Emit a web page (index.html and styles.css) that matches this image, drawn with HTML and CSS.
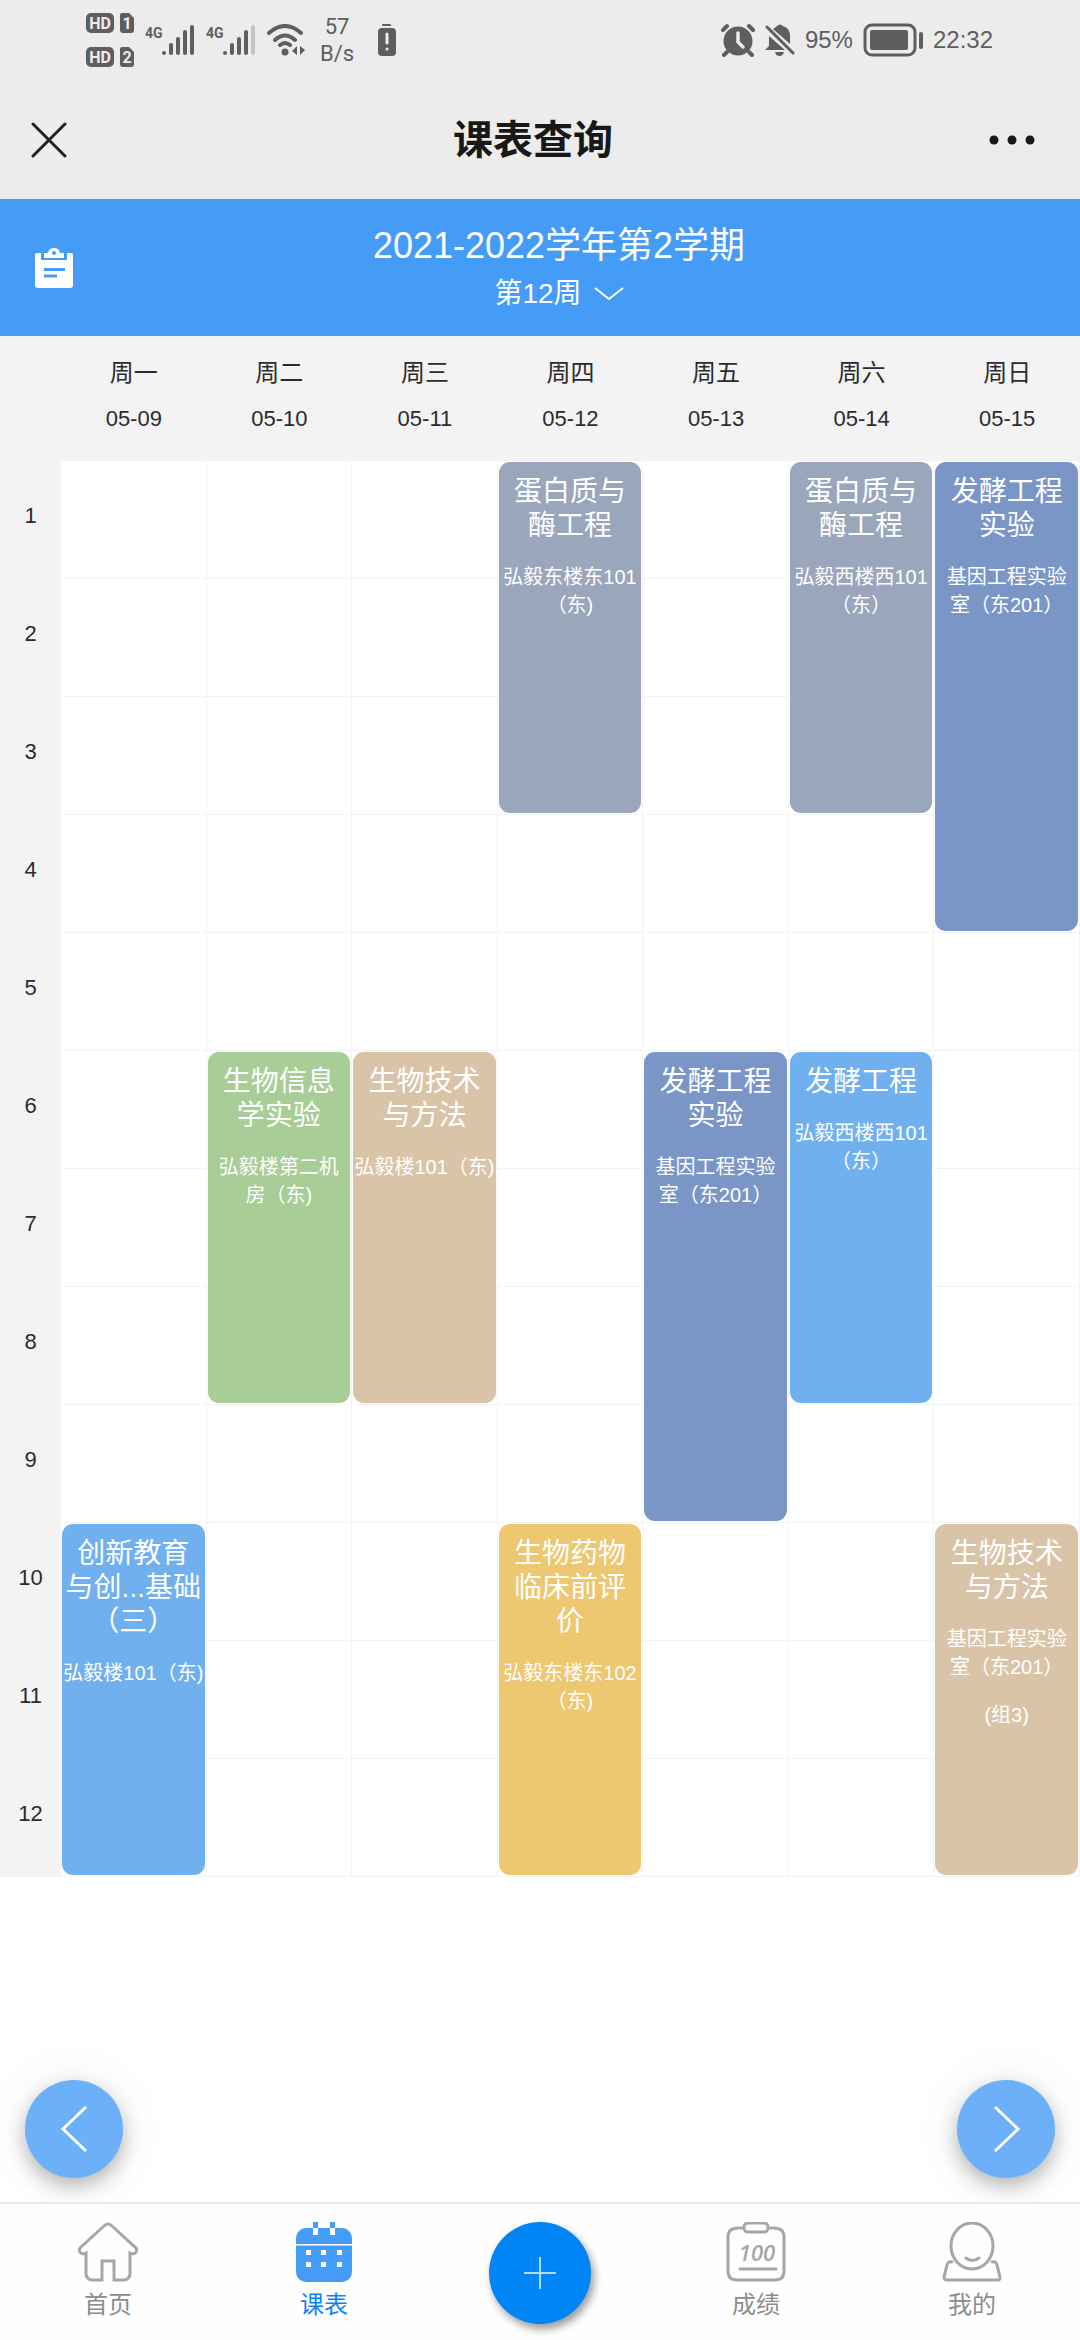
FILE: index.html
```html
<!DOCTYPE html>
<html lang="zh-CN">
<head>
<meta charset="utf-8">
<meta name="viewport" content="width=device-width, initial-scale=1">
<title>课表查询</title>
<link rel="stylesheet" href="styles.css">
</head>
<body>
<div class="status">
  <div class="status-left">
    <svg class="ico hd" width="48" height="56" viewBox="0 0 48 56">
      <rect width="28" height="20" rx="5" y="1"/><path d="M36 1h7l5 5v12a3 3 0 0 1-3 3H37a3 3 0 0 1-3-3V3a2 2 0 0 1 2-2z"/>
      <rect width="28" height="20" rx="5" y="35"/><path d="M36 35h7l5 5v12a3 3 0 0 1-3 3H37a3 3 0 0 1-3-3V37a2 2 0 0 1 2-2z"/>
      <text class="knock" x="14" y="17" text-anchor="middle">HD</text><text class="knock" x="41" y="17" text-anchor="middle">1</text>
      <text class="knock" x="14" y="51" text-anchor="middle">HD</text><text class="knock" x="41" y="51" text-anchor="middle">2</text>
    </svg>
    <svg class="ico signal" width="50" height="32" viewBox="0 0 50 32">
      <text class="net" x="0" y="14">4G</text>
      <path class="bars" d="M19 29v0M26 21v8M33 15v14M40 8v21M47 3v26"/>
    </svg>
    <svg class="ico signal" width="50" height="32" viewBox="0 0 50 32">
      <text class="net" x="0" y="14">4G</text>
      <path class="bars" d="M19 29v0M26 21v8M33 15v14M40 8v21"/><path class="bars weak" d="M47 3v26"/>
    </svg>
    <svg class="ico" width="40" height="32" viewBox="0 0 40 32">
      <path class="arc" d="M2 9Q18-5 34 9M8 16q10-9 20 0M13 21q5-4 10 0"/><circle cx="18" cy="28" r="3.5"/>
      <path d="M30 22v9l-5-4zM33 22v9l5-5z"/>
    </svg>
    <div class="speed"><span>57</span><span>B/s</span></div>
    <svg class="ico warn" width="20" height="34" viewBox="0 0 20 34">
      <rect x="5" y="1" width="9" height="2" rx="1"/><rect x="1" y="5" width="18" height="28" rx="4"/>
      <path d="M10 11v9M10 26v0" fill="none" stroke="#ececec" stroke-width="3" stroke-linecap="round"/>
    </svg>
  </div>
  <div class="status-right">
    <svg class="ico" width="34" height="34" viewBox="0 0 34 34">
      <circle cx="17" cy="18" r="14.500"/>
      <path d="M2 7l4-4M28 3l4 4M6 29l-3 3M28 29l3 3" fill="none" stroke="#5e5e5e" stroke-width="4" stroke-linecap="round"/>
      <path d="M17 10v9l5 5" fill="none" stroke="#ececec" stroke-width="3.500" stroke-linecap="round" stroke-linejoin="round"/>
    </svg>
    <svg class="ico" width="30" height="34" viewBox="0 0 30 34">
      <path d="M0 27l4-4V13l16 14zM8 6q3-2 4-3 3-3 6 0 8 3 7 11v7zM10 29h9q-1 4-4.500 4T10 29z"/>
      <path d="M2 4l26 26" fill="none" stroke="#5e5e5e" stroke-width="3" stroke-linecap="round"/>
    </svg>
    <span class="clock">95%</span>
    <svg class="ico" width="60" height="34" viewBox="0 0 60 34">
      <rect x="2" y="2" width="50" height="30" rx="7" fill="none" stroke="#5e5e5e" stroke-width="3"/>
      <rect x="7" y="7" width="38" height="20" rx="2"/><rect x="56" y="9" width="4" height="17" rx="2"/>
    </svg>
    <span class="clock">22:32</span>
  </div>
</div>

<header class="titlebar">
  <button class="plain" type="button" aria-label="关闭"><svg width="36" height="36" viewBox="0 0 36 36"><path d="M2 2l32 32M34 2L2 34" fill="none" stroke="#222" stroke-width="3" stroke-linecap="round"/></svg></button>
  <h1 class="title">课表查询</h1>
  <button class="plain more" type="button" aria-label="更多"><svg width="46" height="10" viewBox="0 0 46 10" fill="#181818"><circle cx="5" cy="5" r="4.500"/><circle cx="23" cy="5" r="4.500"/><circle cx="41" cy="5" r="4.500"/></svg></button>
</header>

<section class="term">
  <button class="plain" type="button" aria-label="课表列表">
    <svg width="38" height="40" viewBox="0 0 38 40">
      <path fill="#fff" d="M2 5h4v7h26V5h4a2 2 0 0 1 2 2v30a3 3 0 0 1-3 3H3a3 3 0 0 1-3-3V7a2 2 0 0 1 2-2z"/>
      <path fill="#fff" fill-rule="evenodd" d="M9 10V5h4q1-5 6-5t6 5h4v5zM19 3a2 2 0 1 0 0 4 2 2 0 0 0 0-4z"/>
      <path d="M9 21.500h21M9 28h13" stroke="#459cf6" stroke-width="3"/>
    </svg>
  </button>
  <div class="term-text">
    <h2 class="term-name">2021-2022学年第2学期</h2>
    <button class="plain week" type="button">第12周<svg width="30" height="16" viewBox="0 0 30 16"><path d="M1 2l14 11L29 2" fill="none" stroke="#fff" stroke-width="2"/></svg></button>
  </div>
</section>

<main class="main">
  <table class="grid">
    <colgroup><col class="gutter"><col span="7"></colgroup>
    <thead>
      <tr>
        <td></td>
        <th scope="col">周一<span>05-09</span></th>
        <th scope="col">周二<span>05-10</span></th>
        <th scope="col">周三<span>05-11</span></th>
        <th scope="col">周四<span>05-12</span></th>
        <th scope="col">周五<span>05-13</span></th>
        <th scope="col">周六<span>05-14</span></th>
        <th scope="col">周日<span>05-15</span></th>
      </tr>
    </thead>
    <tbody>
      <tr>
        <th scope="row">1</th><td></td><td></td><td></td>
        <td class="busy" rowspan="3"><div class="course slate"><h3>蛋白质与<br>酶工程</h3><p>弘毅东楼东101<br>（东)</p></div></td>
        <td></td>
        <td class="busy" rowspan="3"><div class="course slate"><h3>蛋白质与<br>酶工程</h3><p>弘毅西楼西101<br>（东）</p></div></td>
        <td class="busy" rowspan="4"><div class="course indigo"><h3>发酵工程<br>实验</h3><p>基因工程实验<br>室（东201）</p></div></td>
      </tr>
      <tr><th scope="row">2</th><td></td><td></td><td></td><td></td></tr>
      <tr><th scope="row">3</th><td></td><td></td><td></td><td></td></tr>
      <tr><th scope="row">4</th><td></td><td></td><td></td><td></td><td></td><td></td></tr>
      <tr><th scope="row">5</th><td></td><td></td><td></td><td></td><td></td><td></td><td></td></tr>
      <tr>
        <th scope="row">6</th><td></td>
        <td class="busy" rowspan="3"><div class="course green"><h3>生物信息<br>学实验</h3><p>弘毅楼第二机<br>房（东)</p></div></td>
        <td class="busy" rowspan="3"><div class="course tan"><h3>生物技术<br>与方法</h3><p>弘毅楼101（东)</p></div></td>
        <td></td>
        <td class="busy" rowspan="4"><div class="course indigo"><h3>发酵工程<br>实验</h3><p>基因工程实验<br>室（东201）</p></div></td>
        <td class="busy" rowspan="3"><div class="course sky"><h3>发酵工程</h3><p>弘毅西楼西101<br>（东）</p></div></td>
        <td></td>
      </tr>
      <tr><th scope="row">7</th><td></td><td></td><td></td></tr>
      <tr><th scope="row">8</th><td></td><td></td><td></td></tr>
      <tr><th scope="row">9</th><td></td><td></td><td></td><td></td><td></td><td></td></tr>
      <tr>
        <th scope="row">10</th>
        <td class="busy" rowspan="3"><div class="course sky"><h3>创新教育<br>与创...基础<br>（三）</h3><p>弘毅楼101（东)</p></div></td>
        <td></td><td></td>
        <td class="busy" rowspan="3"><div class="course amber"><h3>生物药物<br>临床前评<br>价</h3><p>弘毅东楼东102<br>（东)</p></div></td>
        <td></td><td></td>
        <td class="busy" rowspan="3"><div class="course tan"><h3>生物技术<br>与方法</h3><p>基因工程实验<br>室（东201）</p><p>(组3)</p></div></td>
      </tr>
      <tr><th scope="row">11</th><td></td><td></td><td></td><td></td></tr>
      <tr><th scope="row">12</th><td></td><td></td><td></td><td></td></tr>
    </tbody>
  </table>
  <div class="pager">
    <button class="round" type="button" aria-label="上一周"><svg width="98" height="98" viewBox="0 0 98 98"><path d="M61 27L38 49l23 22" fill="none" stroke="#fff" stroke-width="3"/></svg></button>
    <button class="round" type="button" aria-label="下一周"><svg width="98" height="98" viewBox="0 0 98 98"><path d="M38 27l23 22-23 22" fill="none" stroke="#fff" stroke-width="3"/></svg></button>
  </div>
</main>

<nav class="tabs">
  <a class="tab" href="#home">
    <svg width="60" height="60" viewBox="0 0 60 60" class="line"><path d="M8 31v20q0 7 7 7h9V39h12v19h9q7 0 7-7V31q4 2 6-1 2-3-1-5L34 4q-4-4-8 0L3 25q-3 3-1 5 2 3 6 1z"/></svg>
    <span>首页</span>
  </a>
  <a class="tab active" href="#schedule">
    <svg width="60" height="60" viewBox="0 0 60 60">
      <rect x="2" y="6" width="56" height="54" rx="10" fill="#459cf6"/>
      <path d="M19 0h5v6h-5zM36 0h5v6h-5z" fill="#459cf6"/>
      <path d="M19 6h5v7h-5zM36 6h5v7h-5zM2 22h56v1.500H2zM12 28h5v5h-5zM27 28h5v5h-5zM43 28h5v5h-5zM12 40h5v5h-5zM27 40h5v5h-5zM43 40h5v5h-5z" fill="#fff"/>
    </svg>
    <span>课表</span>
  </a>
  <button class="add" type="button" aria-label="添加"><svg width="34" height="34" viewBox="0 0 34 34"><path d="M17 1v32M1 17h32" stroke="#b5dcff" stroke-width="2"/></svg></button>
  <a class="tab" href="#score">
    <svg width="60" height="60" viewBox="0 0 60 60" class="line">
      <path d="M16 6h-4Q2 6 2 15v34q0 9 9 9h38q9 0 9-9V15q0-9-10-9h-4"/><rect x="18" y="1" width="24" height="9" rx="4"/><path d="M14 47h36"/>
      <text x="31" y="39" text-anchor="middle">100</text>
    </svg>
    <span>成绩</span>
  </a>
  <a class="tab" href="#me">
    <svg width="60" height="60" viewBox="0 0 60 60" class="line"><ellipse cx="30" cy="24" rx="21" ry="23"/><path d="M24 36q6 5 13 0M10 40q-4-1-5 3L2 55q0 3 3 3h51q2 0 2-3l-3-12q-1-4-5-3"/></svg>
    <span>我的</span>
  </a>
</nav>
</body>
</html>
```

FILE: styles.css
```css
* { box-sizing: border-box; }

body {
  margin: 0;
  min-height: 100vh;
  display: flex;
  flex-direction: column;
  background: #fff;
  color: #2b2b2f;
  font-family: "Liberation Sans", "Noto Sans CJK SC", sans-serif;
  font-size: 24px;
}

h1, h2, h3, p { margin: 0; font-weight: 400; }
svg { display: block; flex: none; }

.plain {
  padding: 0;
  border: 0;
  background: none;
  color: inherit;
  font: inherit;
  cursor: pointer;
}

/* status bar */
.status {
  display: flex;
  justify-content: space-between;
  height: 80px;
  padding: 0 87px 0 86px;
  background: #ececec;
  color: #5e5e5e;
}
.status-left, .status-right { display: flex; align-items: center; gap: 10px; }
.status-left { gap: 11px; }
.ico { fill: #5e5e5e; }
.knock { fill: #ececec; font: 700 16px Roboto, sans-serif; }
.net { font: 700 14px Roboto, sans-serif; }
.bars { fill: none; stroke: #5e5e5e; stroke-width: 4; stroke-linecap: round; }
.bars.weak { stroke: #c4c4c4; }
.arc { fill: none; stroke: #5e5e5e; stroke-width: 4; stroke-linecap: round; }
.speed {
  display: flex;
  flex-direction: column;
  align-items: center;
  padding: 0 12px 0 2px;
  font: 22px/27px Roboto, sans-serif;
}

/* page title */
.titlebar {
  display: grid;
  grid-template-columns: 1fr auto 1fr;
  align-items: center;
  justify-items: start;
  height: 119px;
  padding: 0 45px 0 31px;
  background: #ececec;
  color: #181818;
}
.title { font-size: 40px; line-height: 60px; font-weight: 700; }
.more { justify-self: end; }

/* term header */
.term {
  display: flex;
  align-items: center;
  height: 137px;
  padding: 0 35px;
  background: #459cf6;
  color: #fff;
}
.term-text { flex: 1; display: flex; flex-direction: column; align-items: center; }
.term-name { font-size: 36px; line-height: 52px; }
.week { display: flex; align-items: center; gap: 12px; font-size: 28px; line-height: 44px; }

/* timetable */
.main { flex: 1; display: flex; flex-direction: column; }
.grid { width: 100%; table-layout: fixed; border-collapse: separate; border-spacing: 0; }
.gutter { width: 61px; }
.grid th { padding: 0; font-weight: 400; background: #f3f3f3; }
.grid thead td { background: #f3f3f3; }
.grid thead th { height: 125px; line-height: 46px; padding-bottom: 6px; }
.grid thead span { display: block; font-size: 22px; }
.grid tbody th { height: 118px; padding-bottom: 8px; font-size: 22px; }
.grid tbody td {
  padding: 0;
  border-right: 1px solid #f3f3f3;
  border-bottom: 1px solid #f3f3f3;
}
.grid tbody .busy { height: 1px; padding: 1px; vertical-align: top; }
.course {
  display: flex;
  flex-direction: column;
  align-items: center;
  gap: 20px;
  height: 100%;
  padding-top: 13px;
  border-radius: 11px;
  color: #fff;
  text-align: center;
  white-space: nowrap;
}
.course h3 { font-size: 28px; line-height: 34px; }
.course p { font-size: 20px; line-height: 28px; }
.slate { background: #9aa6bc; }
.indigo { background: #7a96c7; }
.green { background: #a9cd96; }
.tan { background: #dac4a8; }
.sky { background: #71b0ef; }
.amber { background: #eec771; }

/* week switching */
.pager {
  display: flex;
  justify-content: space-between;
  margin-top: auto;
  padding: 24px 25px;
}
.round {
  width: 98px;
  height: 98px;
  padding: 0;
  border: 0;
  border-radius: 50%;
  background: #6bb0f8;
  box-shadow: 0 8px 20px rgba(0, 0, 0, .28), 0 0 60px rgba(0, 0, 0, .06);
  cursor: pointer;
}

/* bottom tabs */
.tabs {
  position: relative;
  display: grid;
  grid-template-columns: repeat(5, 1fr);
  justify-items: center;
  height: 138px;
  padding-top: 18px;
  border-top: 2px solid #e9e9e9;
  background: #fefefe;
}
.tab {
  display: flex;
  flex-direction: column;
  align-items: center;
  gap: 4px;
  color: #8c8c8c;
  line-height: 38px;
  text-decoration: none;
}
.tab.active { color: #0a84f2; }
.line { fill: none; stroke: #a6a6a6; stroke-width: 3; stroke-linecap: round; }
.line text { fill: #a6a6a6; stroke: none; font: italic 600 22px "Open Sans", sans-serif; }
.add {
  display: grid;
  place-items: center;
  width: 102px;
  height: 102px;
  padding: 0;
  border: 0;
  border-radius: 50%;
  background: #0085f7;
  box-shadow: 3px 5px 8px rgba(0, 0, 0, .4);
  cursor: pointer;
}
```
